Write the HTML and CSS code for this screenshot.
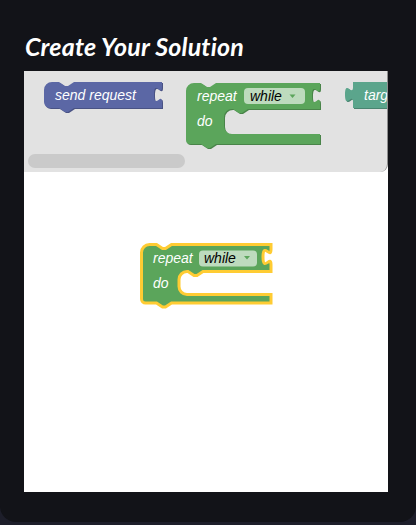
FILE: index.html
```html
<!DOCTYPE html>
<html lang="en">
<head>
<meta charset="utf-8">
<title>Create Your Solution</title>
<link rel="stylesheet" href="styles.css">
</head>
<body>
<div class="card">
  <h1 class="title">Create Your Solution</h1>
  <div class="workspace">
    <div class="flyout">
      <svg class="flyout-blocks" width="363" height="83" viewBox="0 0 363 83">
        <g class="block">
          <path class="dark-blue" transform="translate(1,1)" d="M20,19 a8,8 0 0 1 8,-8 H35 l6,4 3,0 6,-4 H138 v5 c0,10 -8,-8 -8,7.5 s8,-2.5 8,7.5 V37 H50 l-6,4 -3,0 -6,-4 H26 a6,6 0 0 1 -6,-6 z"/>
          <path class="fill-blue" d="M20,19 a8,8 0 0 1 8,-8 H35 l6,4 3,0 6,-4 H138 v5 c0,10 -8,-8 -8,7.5 s8,-2.5 8,7.5 V37 H50 l-6,4 -3,0 -6,-4 H26 a6,6 0 0 1 -6,-6 z"/>
          <text class="label" x="31" y="29">send request</text>
        </g>
        <g class="block">
          <path class="dark-green" transform="translate(1,1)" d="M162,20 a8,8 0 0 1 8,-8 H177 l6,4 3,0 6,-4 H296 v5 c0,10 -8,-8 -8,7.5 s8,-2.5 8,7.5 V38 H224 l-6,4 -3,0 -6,-4 h-1 a8,8 0 0 0 -8,8 V55 a8,8 0 0 0 8,8 H296 V73 H192 l-6,4 -3,0 -6,-4 H166 a4,4 0 0 1 -4,-4 z"/>
          <path class="fill-green" d="M162,20 a8,8 0 0 1 8,-8 H177 l6,4 3,0 6,-4 H296 v5 c0,10 -8,-8 -8,7.5 s8,-2.5 8,7.5 V38 H224 l-6,4 -3,0 -6,-4 h-1 a8,8 0 0 0 -8,8 V55 a8,8 0 0 0 8,8 H296 V73 H192 l-6,4 -3,0 -6,-4 H166 a4,4 0 0 1 -4,-4 z"/>
          <text class="label" x="173" y="30">repeat</text>
          <rect class="field" x="220" y="17" width="61" height="16" rx="4"/>
          <text class="field-text" x="226" y="30">while</text>
          <polygon class="arrow" points="265.5,23.5 271.5,23.5 268.5,27"/>
          <text class="label" x="173" y="55">do</text>
        </g>
        <g class="block">
          <path class="dark-teal" transform="translate(1,1)" d="M329,11 H380 V37 H329 V31 c0,-10 -8,8 -8,-7.5 s8,2.5 8,-7.5 z"/>
          <path class="fill-teal" d="M329,11 H380 V37 H329 V31 c0,-10 -8,8 -8,-7.5 s8,2.5 8,-7.5 z"/>
          <text class="label" x="340" y="29">target</text>
        </g>
      </svg>
      <div class="scrollbar"></div>
    </div>
    <div class="canvas">
      <svg class="canvas-blocks" width="364" height="320" viewBox="0 0 364 320">
        <g class="block">
          <path class="fill-green selected" d="M117.5,80.5 a8,8 0 0 1 8,-8 H132.5 l6,4 3,0 6,-4 H247 v5 c0,10 -8,-8 -8,7.5 s8,-2.5 8,7.5 V99.5 H179 l-6,4 -3,0 -6,-4 h-1 a8,8 0 0 0 -8,8 V114.5 a8,8 0 0 0 8,8 H247 V131 H147.5 l-6,4 -3,0 -6,-4 H121.5 a4,4 0 0 1 -4,-4 z"/>
          <text class="label" x="129" y="91">repeat</text>
          <rect class="field" x="175" y="78.5" width="58" height="16" rx="4"/>
          <text class="field-text" x="180" y="91">while</text>
          <polygon class="arrow" points="220,84 226,84 223,87.5"/>
          <text class="label" x="129" y="116">do</text>
        </g>
      </svg>
    </div>
  </div>
</div>
</body>
</html>
```

FILE: styles.css
```css
html, body {
  margin: 0;
  padding: 0;
}

body {
  width: 416px;
  height: 525px;
  background: #1d1e2a;
  overflow: hidden;
}

.card {
  background: #121318;
  border-radius: 0 0 16px 16px;
  padding: 31px 28px 30px 24px;
}

.title {
  margin: 0 0 10px 0;
  padding-left: 1px;
  font-family: Lato, "Noto Sans", sans-serif;
  font-style: italic;
  font-weight: 700;
  font-size: 25px;
  line-height: 30px;
  letter-spacing: 0.2px;
  color: #ffffff;
}

.workspace {
  width: 364px;
  height: 421px;
  background: #ffffff;
  display: flex;
  flex-direction: column;
}

.flyout {
  height: 101px;
  background: #e2e2e2;
  border-right: 1px solid #8e8e8e;
  border-bottom-right-radius: 8px;
  display: flex;
  flex-direction: column;
  overflow: hidden;
}

.flyout-blocks {
  display: block;
  overflow: hidden;
}

.scrollbar {
  margin: 0 0 4px 4px;
  width: 157px;
  height: 14px;
  border-radius: 7px;
  background: #cacaca;
}

.canvas {
  flex: 1;
}

.canvas-blocks {
  display: block;
}

.label, .field-text {
  font-family: "Liberation Sans", Arial, sans-serif;
  font-style: italic;
  font-size: 14px;
}

.label {
  fill: #ffffff;
}

.field-text {
  fill: #000000;
}

.field {
  fill: #bddbbd;
}

.arrow {
  fill: #5ba55b;
}

.fill-blue { fill: #5b67a5; }
.dark-blue { fill: #495284; }
.fill-green { fill: #5ba55b; }
.dark-green { fill: #498449; }
.fill-teal { fill: #5ba58c; }
.dark-teal { fill: #498470; }

.selected {
  stroke: #ffcc33;
  stroke-width: 3;
}
```
